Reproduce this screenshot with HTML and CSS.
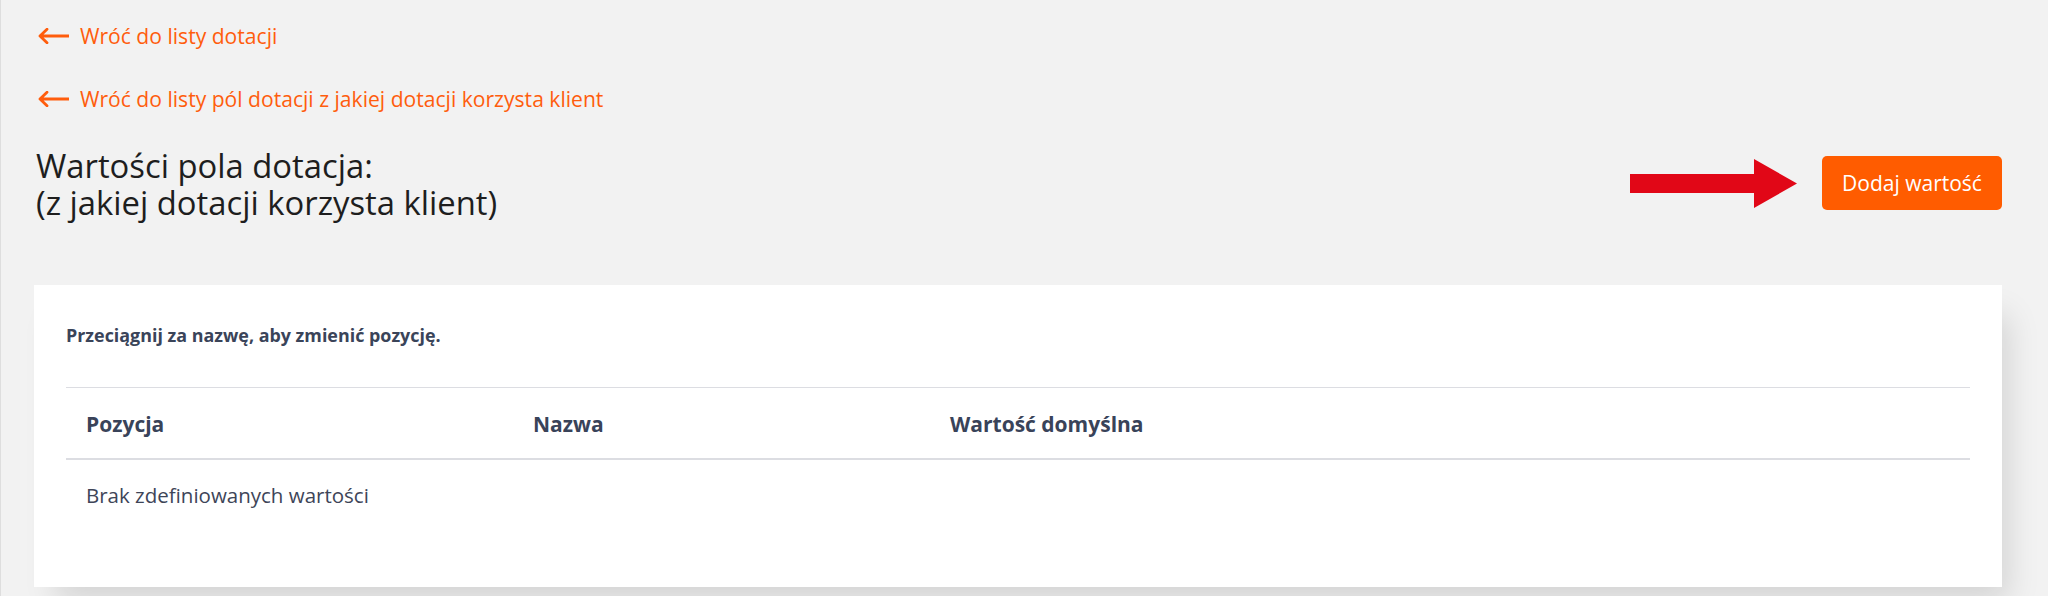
FILE: index.html
```html
<!DOCTYPE html>
<html lang="pl">
<head>
<meta charset="utf-8">
<title>Wartości pola dotacja</title>
<link rel="stylesheet" href="styles.css">
</head>
<body>
<div class="page">
  <nav class="back-links">
    <a class="back-link" href="#">
      <svg class="back-icon" viewBox="0 0 31 16" width="31" height="16" aria-hidden="true"><path d="M2 8H31M9 1.2L2 8L9 14.8" fill="none" stroke="currentColor" stroke-width="2.8" stroke-linecap="round" stroke-linejoin="round"/></svg>
      <span>Wróć do listy dotacji</span>
    </a>
    <a class="back-link" href="#">
      <svg class="back-icon" viewBox="0 0 31 16" width="31" height="16" aria-hidden="true"><path d="M2 8H31M9 1.2L2 8L9 14.8" fill="none" stroke="currentColor" stroke-width="2.8" stroke-linecap="round" stroke-linejoin="round"/></svg>
      <span>Wróć do listy pól dotacji z jakiej dotacji korzysta klient</span>
    </a>
  </nav>

  <header class="page-head">
    <h1 class="title"><span class="title-line">Wartości pola dotacja:</span><span class="title-line">(z jakiej dotacji korzysta klient)</span></h1>
    <div class="actions">
      <svg class="pointer" viewBox="0 0 167 49" width="167" height="49" aria-hidden="true"><polygon points="0,15 124,15 124,0 167,24.5 124,49 124,34 0,34" fill="#e10717"/></svg>
      <button class="btn-primary" type="button">Dodaj wartość</button>
    </div>
  </header>

  <section class="card">
    <p class="hint">Przeciągnij za nazwę, aby zmienić pozycję.</p>
    <table class="values">
      <colgroup>
        <col class="col-pos">
        <col class="col-name">
        <col class="col-default">
      </colgroup>
      <thead>
        <tr><th>Pozycja</th><th>Nazwa</th><th>Wartość domyślna</th></tr>
      </thead>
      <tbody>
        <tr><td colspan="3">Brak zdefiniowanych wartości</td></tr>
      </tbody>
    </table>
  </section>
</div>
</body>
</html>
```

FILE: styles.css
```css
* { box-sizing: border-box; }

html, body {
  margin: 0;
  height: 100%;
}

body {
  background: #f2f2f2;
  font-family: "Open Sans", "Noto Sans", sans-serif;
  border-left: 1px solid #dedede;
  overflow: hidden;
}

.page {
  padding: 22px 46px 0 33px;
}

.back-links {
  display: flex;
  flex-direction: column;
  align-items: flex-start;
  gap: 35px;
  padding-left: 4px;
}

.back-link {
  display: flex;
  align-items: center;
  gap: 11px;
  color: #ff5d0d;
  text-decoration: none;
  font-size: 21.1px;
  line-height: 28px;
}

.back-icon {
  display: block;
  flex: none;
}

.page-head {
  display: flex;
  justify-content: space-between;
  align-items: center;
  margin-top: 34px;
}

.title {
  margin: 0;
  padding-left: 2px;
  font-size: 32.8px;
  font-weight: 400;
  line-height: 37px;
  color: #1e1e1e;
}

.title-line {
  display: block;
}

.actions {
  display: flex;
  align-items: center;
  gap: 25px;
  margin-top: -2px;
}

.pointer {
  display: block;
}

.btn-primary {
  height: 54px;
  width: 180px;
  padding: 0;
  border: none;
  border-radius: 5px;
  background: #ff5c00;
  color: #ffffff;
  font-family: "Open Sans", "Noto Sans", sans-serif;
  font-size: 21px;
  cursor: pointer;
}

.card {
  margin-top: 64px;
  background: #ffffff;
  padding: 38px 32px 57px;
  box-shadow: 14px 22px 30px -8px rgba(0, 0, 0, 0.13);
}

.hint {
  margin: 0 0 40px;
  font-size: 17.9px;
  font-weight: 700;
  line-height: 24px;
  color: #3a4459;
}

.values {
  width: 100%;
  border-collapse: collapse;
  table-layout: fixed;
}

.col-pos { width: 447px; }
.col-name { width: 417px; }

.values th {
  text-align: left;
  font-size: 21px;
  font-weight: 700;
  line-height: 28px;
  color: #394359;
  padding: 22px 20px 20px;
  border-top: 1px solid #dcdde2;
  border-bottom: 2px solid #dcdde2;
}

.values td {
  font-size: 20.5px;
  line-height: 28px;
  color: #3e4558;
  padding: 21px 20px;
}
```
